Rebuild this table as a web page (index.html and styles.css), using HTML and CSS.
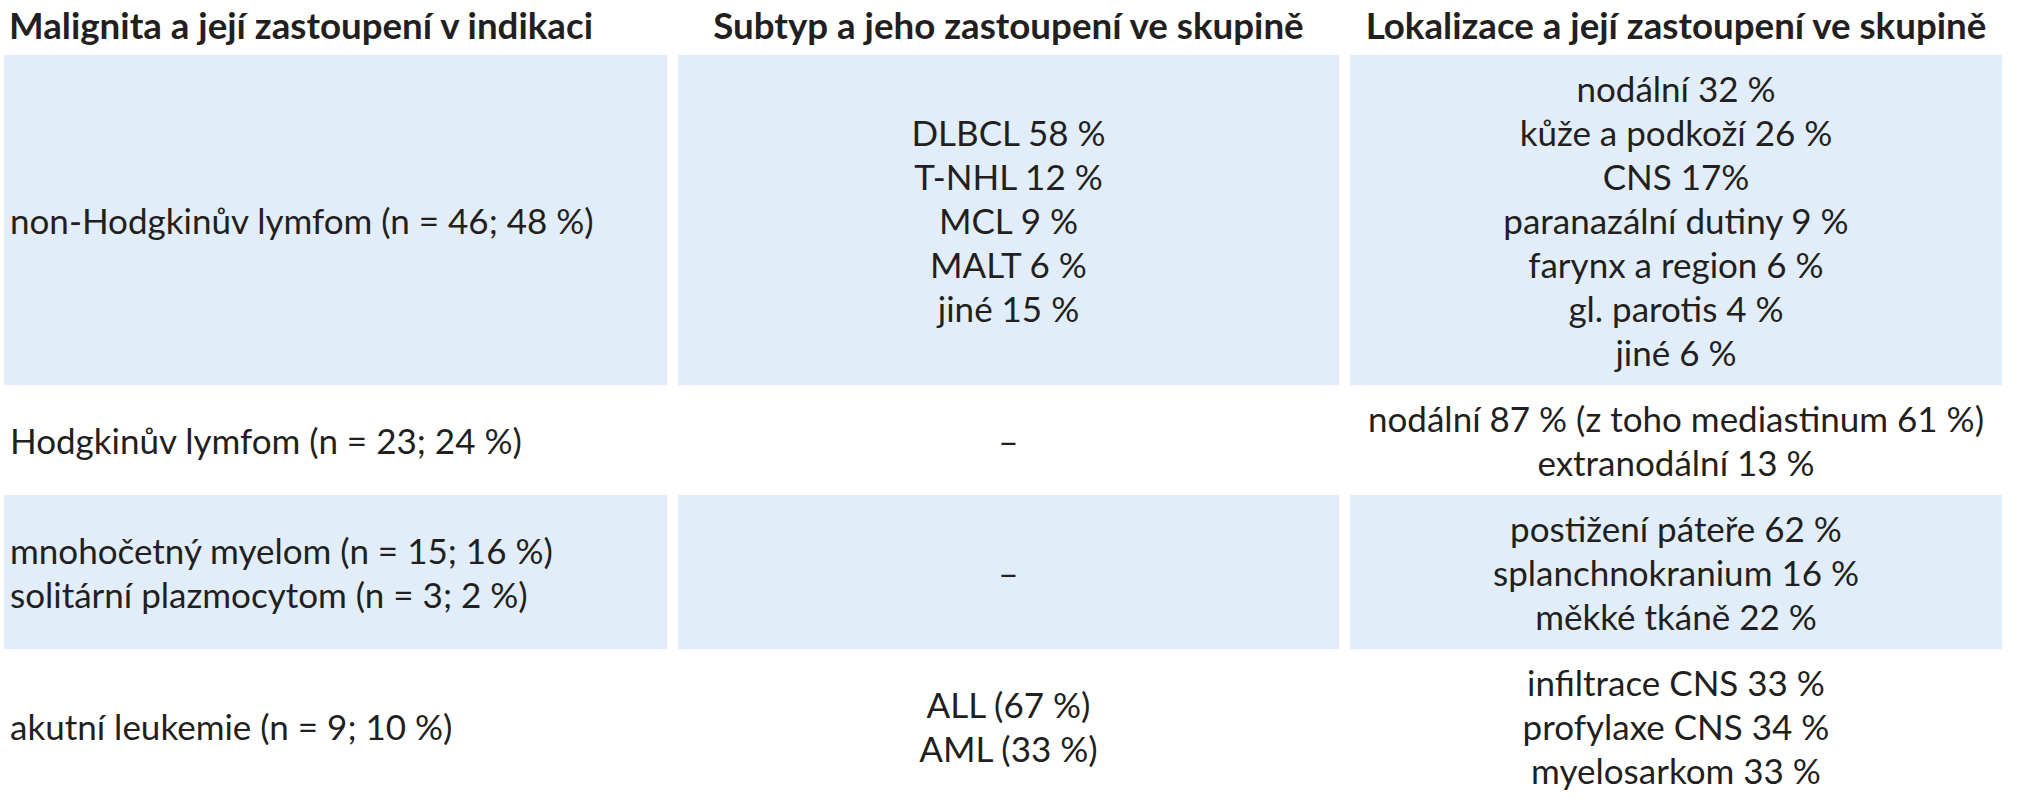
FILE: index.html
```html
<!DOCTYPE html>
<html lang="cs">
<head>
<meta charset="utf-8">
<title>Malignita a její zastoupení v indikaci</title>
<link rel="stylesheet" href="styles.css">
</head>
<body>
<div class="table">
  <div class="th th-left">Malignita a její zastoupení v indikaci</div>
  <div class="th">Subtyp a jeho zastoupení ve skupině</div>
  <div class="th">Lokalizace a její zastoupení ve skupině</div>

  <div class="td td-left shade">non-Hodgkinův lymfom (n = 46; 48 %)</div>
  <div class="td shade">
    <span>DLBCL 58 %</span><span>T-NHL 12 %</span><span>MCL 9 %</span><span>MALT 6 %</span><span>jiné 15 %</span>
  </div>
  <div class="td shade">
    <span>nodální 32 %</span><span>kůže a podkoží 26 %</span><span>CNS 17%</span><span>paranazální dutiny 9 %</span><span>farynx a region 6 %</span><span>gl. parotis 4 %</span><span>jiné 6 %</span>
  </div>

  <div class="td td-left">Hodgkinův lymfom (n = 23; 24 %)</div>
  <div class="td"><span>–</span></div>
  <div class="td">
    <span>nodální 87 % (z toho mediastinum 61 %)</span><span>extranodální 13 %</span>
  </div>

  <div class="td td-left shade">
    <span>mnohočetný myelom (n = 15; 16 %)</span><span>solitární plazmocytom (n = 3; 2 %)</span>
  </div>
  <div class="td shade"><span>–</span></div>
  <div class="td shade">
    <span>postižení páteře 62 %</span><span>splanchnokranium 16 %</span><span>měkké tkáně 22 %</span>
  </div>

  <div class="td td-left">akutní leukemie (n = 9; 10 %)</div>
  <div class="td"><span>ALL (67 %)</span><span>AML (33 %)</span></div>
  <div class="td">
    <span>infiltrace CNS 33 %</span><span>profylaxe CNS 34 %</span><span>myelosarkom 33 %</span>
  </div>
</div>
</body>
</html>
```

FILE: styles.css
```css
html, body {
  margin: 0;
  padding: 0;
  background: #ffffff;
}

body {
  font-family: "Lato", "Liberation Sans", sans-serif;
  color: #231f20;
}

.table {
  display: grid;
  grid-template-columns: 663px 661px 652px;
  column-gap: 11px;
  margin-left: 4px;
  width: 1998px;
}

.th {
  height: 55px;
  box-sizing: border-box;
  padding-top: 4px;
  font-weight: 700;
  font-size: 36.7px;
  line-height: 42px;
  text-align: center;
  white-space: nowrap;
}

.th-left {
  text-align: left;
  padding-left: 5px;
}

.td {
  display: flex;
  flex-direction: column;
  justify-content: center;
  align-items: center;
  padding: 11px 0;
  font-size: 35px;
  line-height: 44px;
  white-space: nowrap;
}

.td-left {
  align-items: flex-start;
  padding-left: 6px;
}

.shade {
  background: #e1edf8;
}
```
